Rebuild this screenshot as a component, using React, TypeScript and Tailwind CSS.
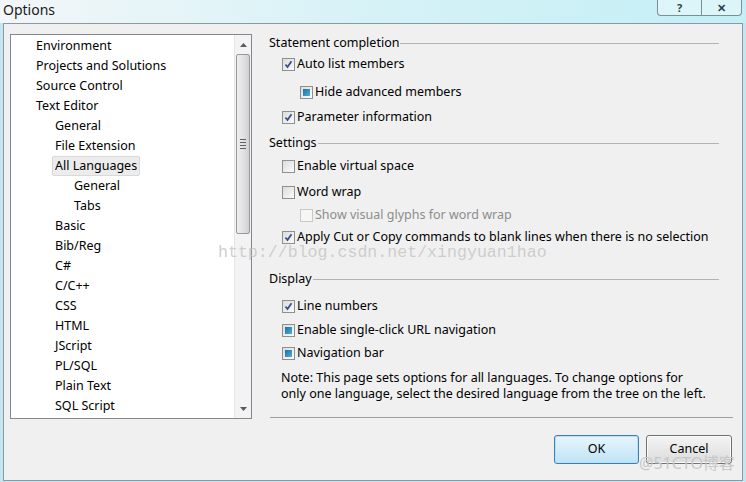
import { ReactNode } from 'react'

type CheckState = 'checked' | 'unchecked' | 'filled' | 'disabled'

const treeItems: { label: string; level: number; selected?: boolean }[] = [
  { label: 'Environment', level: 0 },
  { label: 'Projects and Solutions', level: 0 },
  { label: 'Source Control', level: 0 },
  { label: 'Text Editor', level: 0 },
  { label: 'General', level: 1 },
  { label: 'File Extension', level: 1 },
  { label: 'All Languages', level: 1, selected: true },
  { label: 'General', level: 2 },
  { label: 'Tabs', level: 2 },
  { label: 'Basic', level: 1 },
  { label: 'Bib/Reg', level: 1 },
  { label: 'C#', level: 1 },
  { label: 'C/C++', level: 1 },
  { label: 'CSS', level: 1 },
  { label: 'HTML', level: 1 },
  { label: 'JScript', level: 1 },
  { label: 'PL/SQL', level: 1 },
  { label: 'Plain Text', level: 1 },
  { label: 'SQL Script', level: 1 },
]

function CheckBox({ state }: { state: CheckState }) {
  if (state === 'disabled') {
    return <span className="box-border block h-[13px] w-[13px] shrink-0 border border-[#c8c8c8] bg-[#f6f6f6]" />
  }
  return (
    <span className="box-border flex h-[13px] w-[13px] shrink-0 items-center justify-center border border-[#8e8f8f] bg-gradient-to-br from-[#dcdcdc] to-[#fbfbfb]">
      {state === 'checked' && (
        <svg width="9" height="9" viewBox="0 0 9 9">
          <path d="M1.5 4.5 L3.5 7 L7.5 1.2" fill="none" stroke="#3b4f8c" strokeWidth="1.8" />
        </svg>
      )}
      {state === 'filled' && (
        <span className="block h-[7px] w-[7px] bg-gradient-to-br from-[#1c6fa6] to-[#4fb0d8]" />
      )}
    </span>
  )
}

function Option({ state, label, indent, mt }: { state: CheckState; label: string; indent: string; mt: string }) {
  return (
    <div className={`flex h-4 items-center gap-[2px] whitespace-nowrap ${indent} ${mt}`}>
      <CheckBox state={state} />
      <span className={state === 'disabled' ? 'text-[#8d8d8d]' : ''}>{label}</span>
    </div>
  )
}

function Section({ title, mt }: { title: string; mt: string }) {
  return (
    <div className={`flex h-4 items-center ${mt}`}>
      <span>{title}</span>
      <span className="ml-px h-px w-0 flex-1 bg-[#b4b4b4]" />
    </div>
  )
}

function Button({ children, primary }: { children: ReactNode; primary?: boolean }) {
  return (
    <button
      type="button"
      className={
        primary
          ? 'h-[29px] w-[85px] rounded-[3px] border border-[#3c7fb1] bg-gradient-to-b from-[#e8f6fd] to-[#bfe3f6] shadow-[inset_0_0_0_1px_#b9e2f7]'
          : 'h-[29px] w-[86px] rounded-[3px] border border-[#707070] bg-gradient-to-b from-[#f4f4f4] to-[#dcdcdc] shadow-[inset_0_0_0_1px_#fbfbfb]'
      }
    >
      {children}
    </button>
  )
}

export default function App() {
  return (
    <div className="relative h-[482px] w-[746px] overflow-hidden bg-[#c6e6ef] font-['Noto_Sans',sans-serif] text-[12.5px] text-black">
      {/* title bar */}
      <div className="flex h-[23px] items-start justify-between bg-gradient-to-r from-[#f2f6f8] via-[#d6f2f7] to-[#c3eff5]">
        <span className="ml-[3px] mt-[1px] text-[14px] leading-[18px] text-[#1a1a1a]">Options</span>
        <div className="mr-[4px] flex h-[16px]">
          <span className="flex w-[45px] items-center justify-center rounded-bl-[4px] border border-t-0 border-[#7d8e9a] bg-white/40 text-[11px] font-bold leading-[14px] text-[#33404a]">?</span>
          <span className="flex w-[40px] items-center justify-center rounded-br-[4px] border border-l-0 border-t-0 border-[#7d8e9a] bg-white/40 text-[11px] font-bold leading-[14px] text-[#33404a]">✕</span>
        </div>
      </div>

      {/* body */}
      <div className="mx-[3px] flex h-[458px] flex-col border border-[#8a9aa4] bg-[#f0f0f0]">
        <div className="flex pt-[10px]">
          {/* tree */}
          <div className="ml-[6px] flex h-[385px] w-[242px] border border-[#828790] bg-white">
            <div className="flex-1 pt-px">
              {treeItems.map((item, i) => (
                <div
                  key={i}
                  className={`flex h-5 items-center ${item.level === 0 ? 'pl-[25px]' : item.level === 1 ? 'pl-[41px]' : 'pl-[63px]'}`}
                >
                  {item.selected ? (
                    <span className="rounded-[2px] border border-[#d9d9d9] bg-[#ececec] px-[2px] leading-[18px]">
                      {item.label}
                    </span>
                  ) : (
                    <span className={item.level === 1 ? 'pl-[3px]' : ''}>{item.label}</span>
                  )}
                </div>
              ))}
            </div>
            {/* scrollbar */}
            <div className="flex w-[17px] flex-col items-center border-l border-[#e6e6e6] bg-[#f3f3f3]">
              <div className="flex h-[19px] items-center justify-center">
                <svg width="7" height="4" viewBox="0 0 7 4">
                  <path d="M0 4 L3.5 0 L7 4 Z" fill="#5a5a5a" />
                </svg>
              </div>
              <div className="flex h-[180px] w-[14px] items-center justify-center rounded-[2px] border border-[#9a9a9a] bg-gradient-to-r from-[#efefef] via-[#e2e2e2] to-[#d0d0d0]">
                <div className="flex flex-col gap-[2px]">
                  <span className="block h-px w-[6px] bg-[#606060]" />
                  <span className="block h-px w-[6px] bg-[#606060]" />
                  <span className="block h-px w-[6px] bg-[#606060]" />
                  <span className="block h-px w-[6px] bg-[#606060]" />
                </div>
              </div>
              <div className="flex-1" />
              <div className="flex h-[19px] items-center justify-center">
                <svg width="7" height="4" viewBox="0 0 7 4">
                  <path d="M0 0 L3.5 4 L7 0 Z" fill="#5a5a5a" />
                </svg>
              </div>
            </div>
          </div>

          {/* options */}
          <div className="ml-[17px] flex w-[450px] flex-col pt-px">
            <Section title="Statement completion" mt="mt-0" />
            <Option state="checked" label="Auto list members" indent="ml-[13px]" mt="mt-[5px]" />
            <Option state="filled" label="Hide advanced members" indent="ml-[31px]" mt="mt-[12px]" />
            <Option state="checked" label="Parameter information" indent="ml-[13px]" mt="mt-[9px]" />
            <Section title="Settings" mt="mt-[10px]" />
            <Option state="unchecked" label="Enable virtual space" indent="ml-[13px]" mt="mt-[7px]" />
            <Option state="unchecked" label="Word wrap" indent="ml-[13px]" mt="mt-[10px]" />
            <Option state="disabled" label="Show visual glyphs for word wrap" indent="ml-[31px]" mt="mt-[7px]" />
            <Option state="checked" label="Apply Cut or Copy commands to blank lines when there is no selection" indent="ml-[13px]" mt="mt-[6px]" />
            <Section title="Display" mt="mt-[26px]" />
            <Option state="checked" label="Line numbers" indent="ml-[13px]" mt="mt-[11px]" />
            <Option state="filled" label="Enable single-click URL navigation" indent="ml-[13px]" mt="mt-[8px]" />
            <Option state="filled" label="Navigation bar" indent="ml-[13px]" mt="mt-[7px]" />
            <p className="ml-[12px] mt-[9px] whitespace-nowrap leading-4">
              Note: This page sets options for all languages. To change options for
              <br />
              only one language, select the desired language from the tree on the left.
            </p>
          </div>
        </div>

        <div className="ml-[266px] mr-[9px] mt-[-2px] h-px bg-[#a0a0a0]" />

        <div className="mr-[10px] mt-[17px] flex justify-end gap-[7px]">
          <Button primary>OK</Button>
          <Button>Cancel</Button>
        </div>
      </div>

      {/* watermarks */}
      <span className="pointer-events-none absolute left-[218px] top-[242px] font-['Liberation_Mono',monospace] text-[16.6px] leading-[22px] text-[#c4c4c4]/80">
        http://blog.csdn.net/xingyuan1hao
      </span>
      <span className="pointer-events-none absolute left-[639px] top-[452px] font-['Noto_Sans','Noto_Sans_CJK_SC',sans-serif] text-[16px] leading-[22px] text-[#c8c8c8]">
        @51CTO博客
      </span>
    </div>
  )
}
